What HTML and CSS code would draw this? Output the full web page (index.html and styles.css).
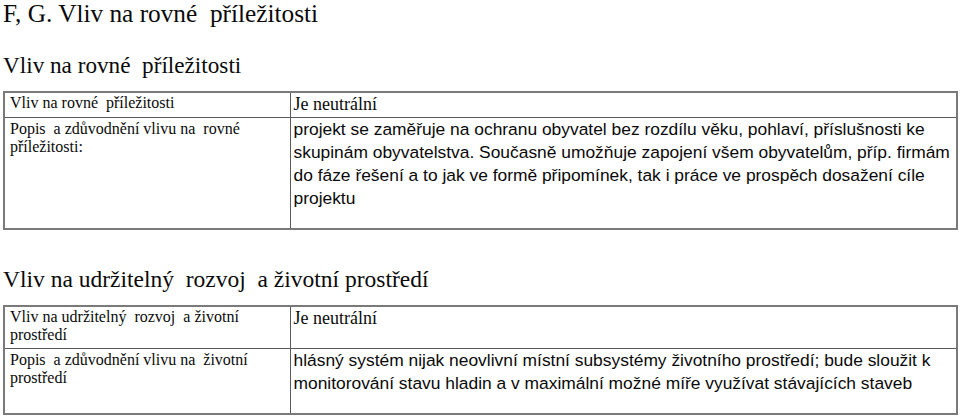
FILE: index.html
```html
<!DOCTYPE html>
<html lang="cs">
<head>
<meta charset="utf-8">
<title>F, G. Vliv na rovné příležitosti</title>
<link rel="stylesheet" href="styles.css">
</head>
<body>
<div class="page">
  <h1 class="title">F, G. Vliv na rovné  příležitosti</h1>

  <h2 class="section">Vliv na rovné  příležitosti</h2>
  <table class="grid grid-first">
    <colgroup><col class="col-label"><col class="col-value"></colgroup>
    <tr class="row-head">
      <td class="label">Vliv na rovné  příležitosti</td>
      <td class="verdict">Je neutrální</td>
    </tr>
    <tr class="row-desc">
      <td class="label">Popis  a zdůvodnění vlivu na  rovné<br>příležitosti:</td>
      <td class="desc">projekt se zaměřuje na ochranu obyvatel bez rozdílu věku, pohlaví, příslušnosti ke<br>skupinám obyvatelstva. Současně umožňuje zapojení všem obyvatelům, příp. firmám<br>do fáze řešení a to jak ve formě připomínek, tak i práce ve prospěch dosažení cíle<br>projektu</td>
    </tr>
  </table>

  <h2 class="section section-second">Vliv na udržitelný  rozvoj  a životní prostředí</h2>
  <table class="grid">
    <colgroup><col class="col-label"><col class="col-value"></colgroup>
    <tr class="row-head">
      <td class="label label-pad">Vliv na udržitelný  rozvoj  a životní<br>prostředí</td>
      <td class="verdict">Je neutrální</td>
    </tr>
    <tr class="row-desc">
      <td class="label">Popis  a zdůvodnění vlivu na  životní<br>prostředí</td>
      <td class="desc">hlásný systém nijak neovlivní místní subsystémy životního prostředí; bude sloužit k<br>monitorování stavu hladin a v maximální možné míře využívat stávajících staveb</td>
    </tr>
  </table>
</div>
</body>
</html>
```

FILE: styles.css
```css
html, body {
  margin: 0;
  padding: 0;
  background: #ffffff;
}

.page {
  padding: 0 2px 0 3px;
  color: #0a0a0a;
  font-family: "Liberation Serif", "Times New Roman", serif;
}

.title,
.section {
  margin: 0;
  font-weight: normal;
  font-family: "Liberation Serif", "Times New Roman", serif;
  white-space: pre-wrap;
}

.title {
  font-size: 25.3px;
  line-height: 26px;
}

.section {
  font-size: 23.2px;
  line-height: 24px;
  margin-top: 27px;
  margin-bottom: 14px;
}

.section-second {
  font-size: 23.5px;
  margin-top: 37px;
}

.grid {
  width: 955px;
  border-collapse: collapse;
  table-layout: fixed;
  border: 2px solid #7a7a7a;
}

.col-label { width: 286px; }

.grid td {
  border: 1px solid #5a5a5a;
  vertical-align: top;
  padding: 0 4px;
  font-family: "Liberation Serif", "Times New Roman", serif;
  color: #0a0a0a;
}

.grid td.label {
  font-size: 16px;
  line-height: 18px;
  white-space: pre-wrap;
  padding-top: 2px;
  padding-left: 5px;
}

.grid .row-head td.label {
  padding-top: 1px;
}

.grid td.label-pad {
  padding-bottom: 4px;
}

.grid td.verdict {
  font-size: 18px;
  line-height: 20px;
  padding-top: 1px;
  padding-bottom: 3px;
  padding-left: 3px;
}

.grid td.desc {
  font-family: "Liberation Sans", Arial, sans-serif;
  font-size: 17.4px;
  line-height: 23px;
  white-space: nowrap;
  padding-top: 0;
  padding-bottom: 18px;
  padding-left: 3px;
}
```
